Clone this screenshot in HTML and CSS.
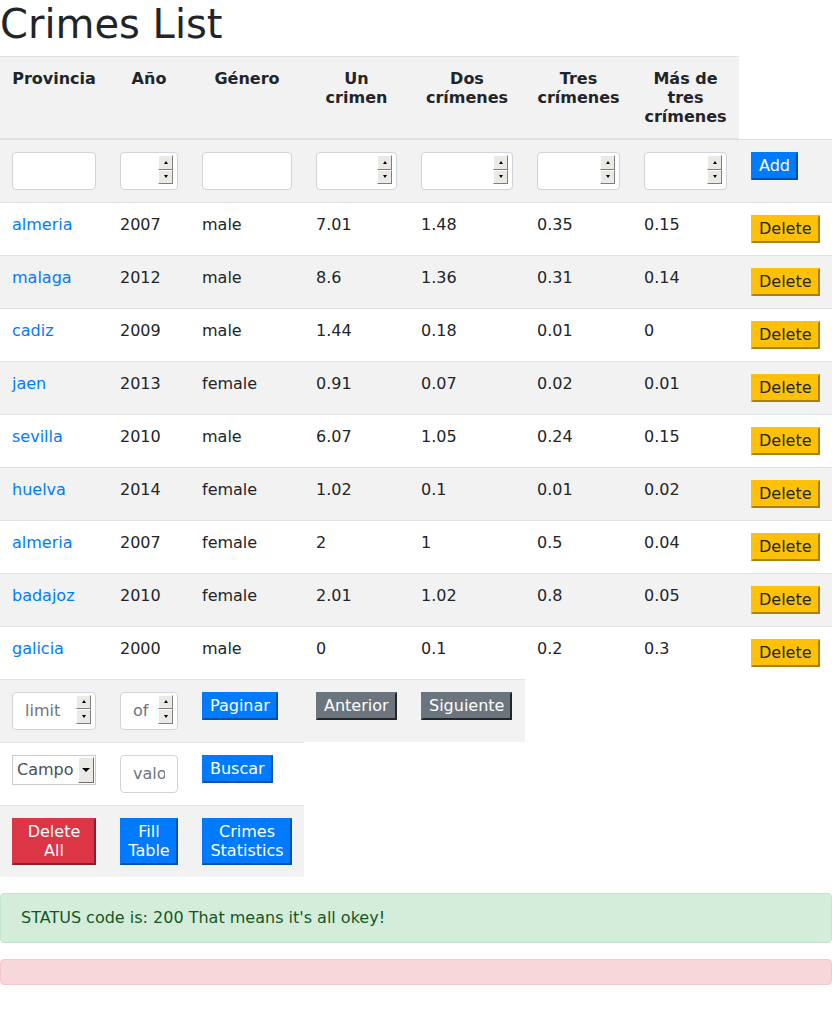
FILE: index.html
```html
<!DOCTYPE html>
<html lang="es">
<head>
<meta charset="utf-8">
<title>Crimes List</title>
<link rel="stylesheet" href="styles.css">
</head>
<body>
<h1 class="title">Crimes List</h1>
<table class="crimes">
  <colgroup>
    <col class="w1"><col class="w2"><col class="w3"><col class="w4">
    <col class="w5"><col class="w6"><col class="w7"><col class="w8">
  </colgroup>
  <thead>
    <tr>
      <th>Provincia</th>
      <th>Año</th>
      <th>Género</th>
      <th>Un crimen</th>
      <th>Dos crímenes</th>
      <th>Tres crímenes</th>
      <th>Más de tres crímenes</th>
    </tr>
  </thead>
  <tbody>
    <tr>
      <td><input class="field" type="text"></td>
      <td><span class="num"><input class="field" type="text"><span class="spin"><span class="sp up"></span><span class="sp down"></span></span></span></td>
      <td><input class="field" type="text"></td>
      <td><span class="num"><input class="field" type="text"><span class="spin"><span class="sp up"></span><span class="sp down"></span></span></span></td>
      <td><span class="num"><input class="field" type="text"><span class="spin"><span class="sp up"></span><span class="sp down"></span></span></span></td>
      <td><span class="num"><input class="field" type="text"><span class="spin"><span class="sp up"></span><span class="sp down"></span></span></span></td>
      <td><span class="num"><input class="field" type="text"><span class="spin"><span class="sp up"></span><span class="sp down"></span></span></span></td>
      <td><button class="btn primary">Add</button></td>
    </tr>
    <tr><td><a href="#">almeria</a></td><td>2007</td><td>male</td><td>7.01</td><td>1.48</td><td>0.35</td><td>0.15</td><td><button class="btn warning">Delete</button></td></tr>
    <tr><td><a href="#">malaga</a></td><td>2012</td><td>male</td><td>8.6</td><td>1.36</td><td>0.31</td><td>0.14</td><td><button class="btn warning">Delete</button></td></tr>
    <tr><td><a href="#">cadiz</a></td><td>2009</td><td>male</td><td>1.44</td><td>0.18</td><td>0.01</td><td>0</td><td><button class="btn warning">Delete</button></td></tr>
    <tr><td><a href="#">jaen</a></td><td>2013</td><td>female</td><td>0.91</td><td>0.07</td><td>0.02</td><td>0.01</td><td><button class="btn warning">Delete</button></td></tr>
    <tr><td><a href="#">sevilla</a></td><td>2010</td><td>male</td><td>6.07</td><td>1.05</td><td>0.24</td><td>0.15</td><td><button class="btn warning">Delete</button></td></tr>
    <tr><td><a href="#">huelva</a></td><td>2014</td><td>female</td><td>1.02</td><td>0.1</td><td>0.01</td><td>0.02</td><td><button class="btn warning">Delete</button></td></tr>
    <tr><td><a href="#">almeria</a></td><td>2007</td><td>female</td><td>2</td><td>1</td><td>0.5</td><td>0.04</td><td><button class="btn warning">Delete</button></td></tr>
    <tr><td><a href="#">badajoz</a></td><td>2010</td><td>female</td><td>2.01</td><td>1.02</td><td>0.8</td><td>0.05</td><td><button class="btn warning">Delete</button></td></tr>
    <tr><td><a href="#">galicia</a></td><td>2000</td><td>male</td><td>0</td><td>0.1</td><td>0.2</td><td>0.3</td><td><button class="btn warning">Delete</button></td></tr>
    <tr>
      <td><span class="num"><input class="field" type="text" placeholder="limit"><span class="spin"><span class="sp up"></span><span class="sp down"></span></span></span></td>
      <td><span class="num"><input class="field" type="text" placeholder="of"><span class="spin"><span class="sp up"></span><span class="sp down"></span></span></span></td>
      <td><button class="btn primary">Paginar</button></td>
      <td><button class="btn secondary">Anterior</button></td>
      <td><button class="btn secondary">Siguiente</button></td>
    </tr>
    <tr>
      <td><span class="sel"><select class="select"><option>Campo</option></select><span class="sel-btn"></span></span></td>
      <td><input class="field" type="text" placeholder="valor"></td>
      <td><button class="btn primary">Buscar</button></td>
    </tr>
    <tr>
      <td><button class="btn danger block">Delete All</button></td>
      <td><button class="btn primary block">Fill Table</button></td>
      <td><button class="btn primary block">Crimes Statistics</button></td>
    </tr>
  </tbody>
</table>
<div class="alert success">STATUS code is: 200 That means it's all okey!</div>
<div class="alert danger-alert"></div>
</body>
</html>
```
FILE: styles.css
```css
html, body {
  margin: 0;
  padding: 0;
}
body {
  font-family: "DejaVu Sans", sans-serif;
  font-size: 16px;
  color: #212529;
  background: #fff;
}
.title {
  margin: 0 0 8px 0;
  font-size: 40px;
  font-weight: normal;
  line-height: 48px;
}
.crimes {
  width: 100%;
  border-collapse: collapse;
  table-layout: fixed;
  margin-bottom: 16px;
}
.w1 { width: 108px; }
.w2 { width: 82px; }
.w3 { width: 114px; }
.w4 { width: 105px; }
.w5 { width: 116px; }
.w6 { width: 107px; }
.w7 { width: 107px; }
.w8 { width: 93px; }
.crimes th {
  padding: 12px;
  text-align: center;
  vertical-align: top;
  font-weight: bold;
  background: #f2f2f2;
  border-top: 1px solid #dee2e6;
  border-bottom: 2px solid #dee2e6;
}
.crimes td {
  padding: 12px;
  vertical-align: top;
  border-top: 1px solid #dee2e6;
}
.crimes tbody tr:nth-child(odd) {
  background: #f2f2f2;
}
.crimes a {
  color: #007bff;
  text-decoration: none;
}
.field {
  display: block;
  box-sizing: border-box;
  width: 100%;
  height: 38px;
  padding: 6px 12px;
  font-family: inherit;
  font-size: 16px;
  line-height: 24px;
  color: #495057;
  background: #fff;
  border: 1px solid #ced4da;
  border-radius: 4px;
  outline: none;
}
.field::placeholder {
  color: #6c757d;
  opacity: 1;
}
.num {
  display: block;
  position: relative;
}
.spin {
  position: absolute;
  top: 3px;
  right: 5px;
  width: 15px;
  height: 29px;
  display: flex;
  flex-direction: column;
}
.sp {
  flex: 1;
  box-sizing: border-box;
  background: #ebe9e5;
  border: 1px solid;
  border-color: #ffffff #7e7e7e #7e7e7e #ffffff;
  display: flex;
  align-items: center;
  justify-content: center;
}
.sp::after {
  content: "";
  width: 0;
  height: 0;
  border-left: 2px solid transparent;
  border-right: 2px solid transparent;
}
.up::after {
  border-bottom: 3px solid #000;
}
.down::after {
  border-top: 3px solid #000;
}
.sel {
  display: block;
  position: relative;
}
.select {
  display: block;
  box-sizing: border-box;
  width: 100%;
  height: 30px;
  padding: 0 4px;
  font-family: inherit;
  font-size: 16px;
  color: #495057;
  background: #fff;
  border: 1px solid #c8cdd2;
  border-radius: 0;
  -webkit-appearance: none;
  appearance: none;
  outline: none;
}
.sel-btn {
  position: absolute;
  top: 2px;
  right: 2px;
  width: 16px;
  height: 26px;
  box-sizing: border-box;
  background: #ebe9e5;
  border: 1px solid;
  border-color: #ffffff #6e6e6e #6e6e6e #ffffff;
  display: flex;
  align-items: center;
  justify-content: center;
}
.sel-btn::after {
  content: "";
  width: 0;
  height: 0;
  border-left: 4px solid transparent;
  border-right: 4px solid transparent;
  border-top: 4px solid #000;
}
.btn {
  font-family: inherit;
  font-size: 16px;
  line-height: 20px;
  padding: 2px 6px;
  margin: 0;
  border: 2px solid;
  border-radius: 0;
  cursor: pointer;
}
.btn.block {
  display: block;
  width: 100%;
  text-align: center;
  line-height: 19.5px;
}
.primary {
  background: #007bff;
  color: #fff;
  border-color: #007bff #0052ab #0052ab #007bff;
}
.warning {
  background: #ffc107;
  color: #212529;
  border-color: #ffc107 #ab8105 #ab8105 #ffc107;
}
.danger {
  background: #dc3545;
  color: #fff;
  border-color: #dc3545 #88212b #88212b #dc3545;
}
.secondary {
  background: #6c757d;
  color: #fff;
  border-color: #6c757d #232629 #232629 #6c757d;
}
.alert {
  padding: 12px 20px;
  margin-bottom: 16px;
  border: 1px solid transparent;
  border-radius: 4px;
  line-height: 24px;
}
.alert.success {
  color: #155724;
  background: #d4edda;
  border-color: #c3e6cb;
}
.alert.danger-alert {
  color: #721c24;
  background: #f8d7da;
  border-color: #f5c6cb;
}
```
